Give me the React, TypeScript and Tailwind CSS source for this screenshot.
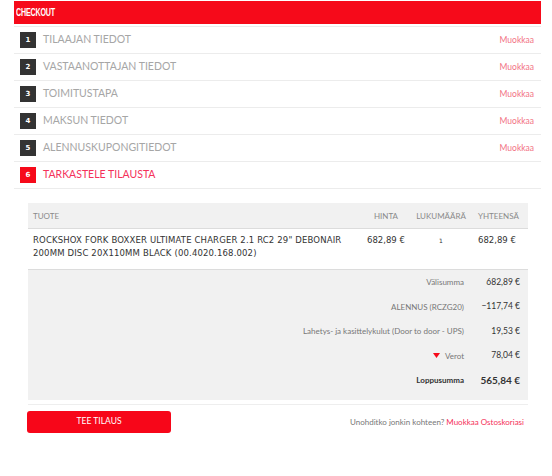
const steps = [
  { n: 1, label: 'TILAAJAN TIEDOT', edit: true },
  { n: 2, label: 'VASTAANOTTAJAN TIEDOT', edit: true },
  { n: 3, label: 'TOIMITUSTAPA', edit: true },
  { n: 4, label: 'MAKSUN TIEDOT', edit: true },
  { n: 5, label: 'ALENNUSKUPONGITIEDOT', edit: true },
  { n: 6, label: 'TARKASTELE TILAUSTA', edit: false },
]

const totals = [
  { label: 'Välisumma', value: '682,89 €' },
  { label: 'ALENNUS (RCZG20)', value: '−117,74 €' },
  { label: 'Lahetys- ja kasittelykulut (Door to door - UPS)', value: '19,53 €' },
  { label: 'Verot', value: '78,04 €', toggle: true },
]

const raleway = "font-['Lato','Open_Sans',sans-serif]"
const verdana = "font-['DejaVu_Sans','Liberation_Sans',sans-serif]"

export default function App() {
  return (
    <div className="min-h-[476px] w-[552px] bg-white pt-px">
      <div className="mx-[14px] w-[527px]">
        <div className="flex h-[23px] items-center bg-[#f60a1a] px-[2px]">
          <span className="origin-left scale-x-[0.62] font-['Liberation_Sans',sans-serif] text-[11.5px] font-bold tracking-[-0.3px] text-white">
            CHECKOUT
          </span>
        </div>

        <div className="mt-[2px] border-t border-[#ececec]">
          {steps.map(s => {
            const active = !s.edit
            return (
              <div key={s.n} className="flex h-[27px] items-center border-b border-[#ececec] pr-[7px] pl-[6px]">
                <span
                  className={`flex h-[16px] w-[16px] items-center justify-center text-[7px] font-bold text-white ${verdana} ${
                    active ? 'bg-[#f60a1a]' : 'bg-[#333333]'
                  }`}
                >
                  {s.n}
                </span>
                <span className={`ml-[7px] text-[10.5px] ${raleway} ${active ? 'text-[#f5315a]' : 'text-[#a6a6a6]'}`}>
                  {s.label}
                </span>
                {s.edit && <span className={`ml-auto text-[8.5px] text-[#f27385] ${raleway}`}>Muokkaa</span>}
              </div>
            )
          })}
        </div>

        <div className="mx-[14px] mt-[14px] w-[500px]">
          <div className={`grid h-[25px] grid-cols-[330px_50px_66px_54px] items-center bg-[#f1f1f1] text-[8px] text-[#8a8a8a] ${raleway}`}>
            <span className="pl-[5px]">TUOTE</span>
            <span className="pl-[16px]">HINTA</span>
            <span className="text-center">LUKUMÄÄRÄ</span>
            <span className="pl-[4px]">YHTEENSÄ</span>
          </div>
          <div className={`grid h-[41px] grid-cols-[330px_50px_66px_54px] border-t border-[#dcdcdc] pt-[5px] text-[8.5px] leading-[13px] tracking-[0.15px] text-[#333] ${verdana}`}>
            <span className="pl-[5px] whitespace-nowrap">
              ROCKSHOX FORK BOXXER ULTIMATE CHARGER 2.1 RC2 29" DEBONAIR
              <br />
              200MM DISC 20X110MM BLACK (00.4020.168.002)
            </span>
            <span className="pl-[9px] tracking-normal whitespace-nowrap">682,89 €</span>
            <span className="text-center text-[6px]">1</span>
            <span className="pl-[4px] tracking-normal whitespace-nowrap">682,89 €</span>
          </div>

          <div className="border-t border-[#dcdcdc] bg-[#f1f1f1] pb-[7px]">
            {totals.map(t => (
              <div key={t.label} className="flex h-[24.5px] items-center justify-end pr-[8px]">
                <span className={`flex items-center gap-[5px] text-[8px] text-[#777] ${raleway}`}>
                  {t.toggle && (
                    <svg width="7" height="5" viewBox="0 0 7 5">
                      <path d="M0 0h7L3.5 5z" fill="#f60a1a" />
                    </svg>
                  )}
                  {t.label}
                </span>
                <span className={`w-[56px] text-right text-[8.5px] text-[#333] ${raleway}`}>{t.value}</span>
              </div>
            ))}
            <div className="flex h-[24.5px] items-center justify-end pr-[8px]">
              <span className={`text-[8px] font-bold text-[#333] ${raleway}`}>Loppusumma</span>
              <span className={`w-[56px] text-right text-[10px] font-bold text-[#333] ${raleway}`}>565,84 €</span>
            </div>
          </div>
          <div className="h-[5px] border-b border-[#eeeeee]" />

          <div className="mt-[6px] flex items-center justify-between">
            <button
              className={`-ml-px h-[22px] w-[144px] rounded-[3px] bg-[#f70619] text-[8.5px] text-white ${raleway}`}
            >
              TEE TILAUS
            </button>
            <span className={`pr-[4px] text-[8px] text-[#777] ${raleway}`}>
              Unohditko jonkin kohteen? <span className="text-[#f5315a]">Muokkaa Ostoskoriasi</span>
            </span>
          </div>
        </div>
      </div>
    </div>
  )
}
